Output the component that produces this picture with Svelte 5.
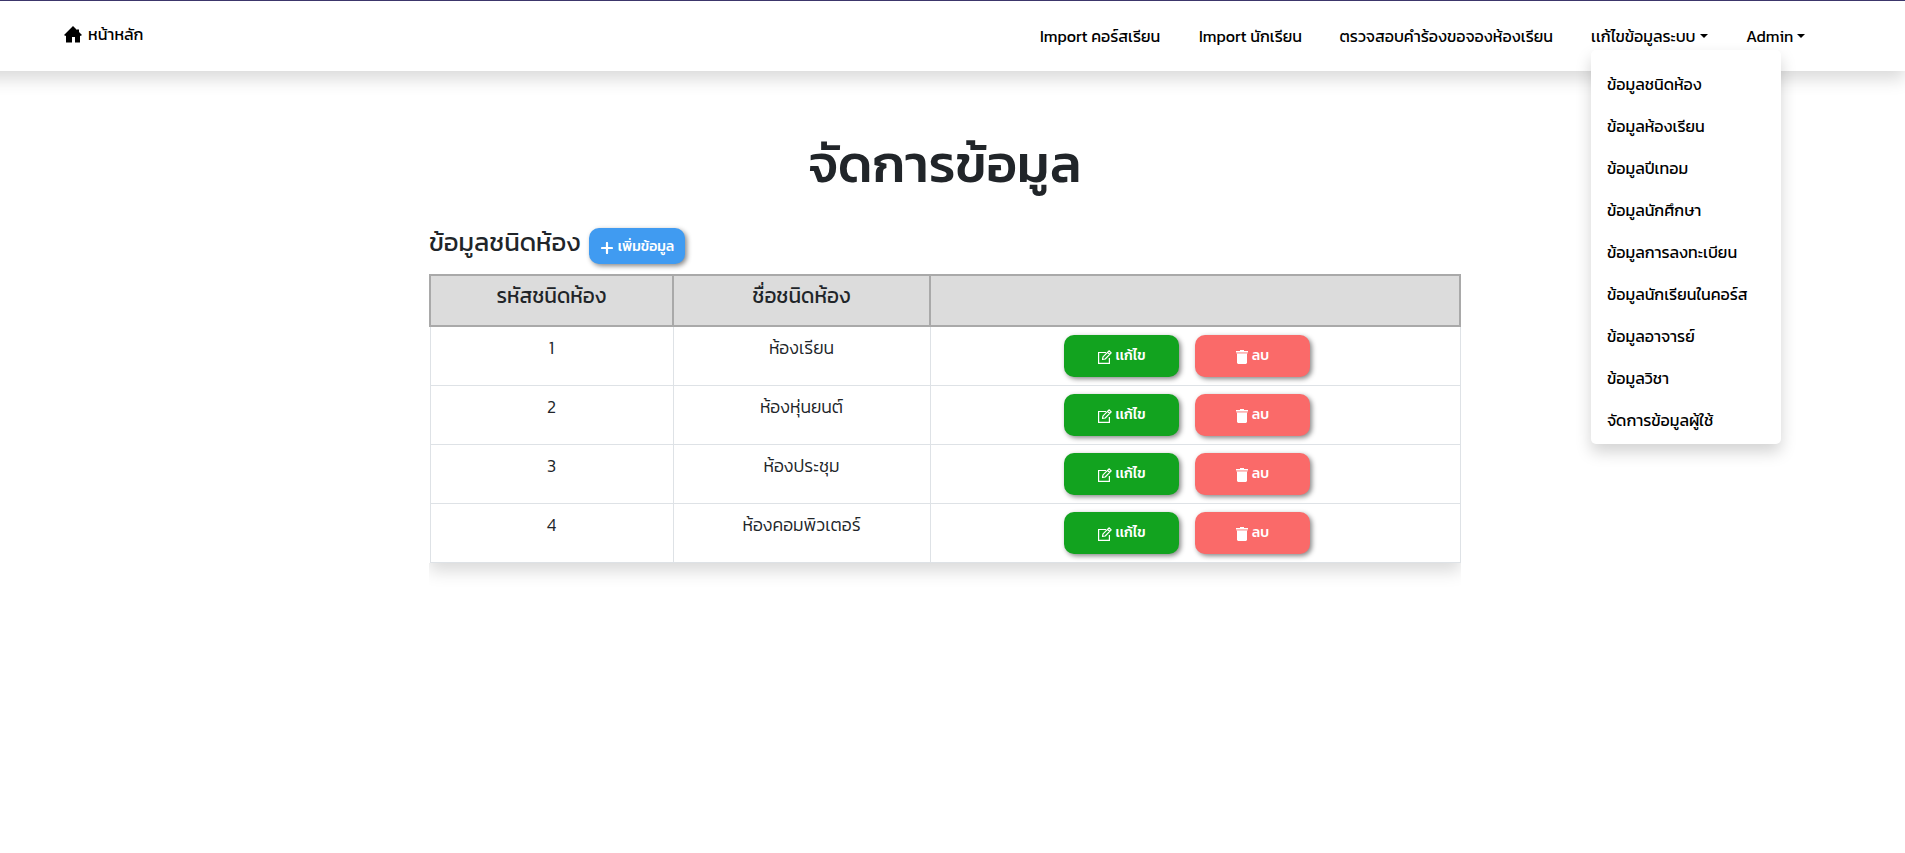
<script>
  const links = [
    { label: 'Import คอร์สเรียน', width: 121 },
    { label: 'Import นักเรียน', width: 102.500 },
    { label: 'ตรวจสอบคำร้องขอจองห้องเรียน', width: 213.500 },
  ];
  const menu = [
    'ข้อมูลชนิดห้อง',
    'ข้อมูลห้องเรียน',
    'ข้อมูลปีเทอม',
    'ข้อมูลนักศึกษา',
    'ข้อมูลการลงทะเบียน',
    'ข้อมูลนักเรียนในคอร์ส',
    'ข้อมูลอาจารย์',
    'ข้อมูลวิชา',
    'จัดการข้อมูลผู้ใช้',
  ];
  const rooms = [
    { id: 1, name: 'ห้องเรียน' },
    { id: 2, name: 'ห้องหุ่นยนต์' },
    { id: 3, name: 'ห้องประชุม' },
    { id: 4, name: 'ห้องคอมพิวเตอร์' },
  ];
</script>

<nav class="navbar">
  <a class="home" href="#home">
    <svg width="18" height="18" viewBox="0 0 18 18"><path d="M9 0 0 9l1.400 1 .6-.4v6.900h6V11h3v5.500h5V9.600l.6.4L18 9l-3-3V3.500h-2V4z" /></svg>
    <span>หน้าหลัก</span>
  </a>
  <div class="links">
    {#each links as link}
      <a href="#import" style:width="{link.width}px">{link.label}</a>
    {/each}
    <div class="dropdown">
      <a href="#data">เเก้ไขข้อมูลระบบ<i class="caret"></i></a>
      <div class="menu">
        {#each menu as item}
          <a href="#item"><span>{item}</span></a>
        {/each}
      </div>
    </div>
    <a class="admin" href="#admin">Admin<i class="caret"></i></a>
  </div>
</nav>

<main>
  <h1>จัดการข้อมูล</h1>
  <section>
    <div class="heading">
      <h2>ข้อมูลชนิดห้อง</h2>
      <button class="add">
        <svg width="12" height="12" viewBox="0 0 12 12"><path d="M6 1v10M1 6h10" fill="none" stroke="#fff" stroke-width="2.200" stroke-linecap="round" /></svg>
        <span>เพิ่มข้อมูล</span>
      </button>
    </div>
    <div class="clip">
      <table>
        <thead>
          <tr><th>รหัสชนิดห้อง</th><th>ชื่อชนิดห้อง</th><th></th></tr>
        </thead>
        <tbody>
          {#each rooms as room}
            <tr>
              <td>{room.id}</td>
              <td>{room.name}</td>
              <td>
                <div class="actions">
                  <button class="edit">
                    <svg width="14" height="14" viewBox="0 0 14 14" fill="none" stroke="#fff"><path d="M8 2.500H.6v10.800h10.800V8" stroke-width="1.200" /><path d="m4.500 9.500.5-2.700 6-6 2.200 2.100-6 6.100zM9.500 2.400l2.200 2.100" stroke-width="1.200" stroke-linejoin="round" /></svg>
                    <span>เเก้ไข</span>
                  </button>
                  <button class="delete">
                    <svg width="12" height="14" viewBox="0 0 12 14" fill="#fff"><path d="M4 0h4v1h4v1H0V1h4z" /><path d="M0 2h12v1.500H0z" opacity=".5" /><path d="M1 3.500h10V13l-1 1H2l-1-1z" /></svg>
                    <span>ลบ</span>
                  </button>
                </div>
              </td>
            </tr>
          {/each}
        </tbody>
      </table>
    </div>
  </section>
</main>

<style>
  :global(body) {
    margin: 0;
    background: #fff;
    color: #212529;
    font-family: Kanit, Prompt, 'Noto Sans Thai', 'Noto Sans', sans-serif;
  }
  * { box-sizing: border-box; }
  a { color: #000; text-decoration: none; white-space: nowrap; }
  button { border: 0; padding: 0; font: inherit; color: #fff; white-space: nowrap; }
  svg { display: block; flex: none; }

  .navbar {
    position: relative;
    display: flex;
    justify-content: space-between;
    height: 71px;
    margin-left: -20px;
    padding: 0 100px 0 84px;
    border-top: 1px solid #3c366b;
    background: #fff;
    box-shadow: 0 8px 16px rgba(0, 0, 0, .15);
    font-size: 16px;
    font-weight: 400;
    line-height: 24px;
  }
  .home { display: flex; gap: 6px; padding-top: 21px; }
  .home svg { margin-top: 4px; }
  .links { display: flex; gap: 38px; padding-top: 23px; }
  .dropdown { position: relative; width: 117px; }
  .dropdown > a, .admin { display: flex; align-items: center; justify-content: space-between; }
  .admin { width: 59px; height: 24px; }
  .caret { border: 4.500px solid transparent; border-top-color: #000; border-bottom: 0; }
  .menu {
    position: absolute;
    top: 26px;
    left: 0;
    width: 190px;
    height: 394px;
    padding: 13px 16px 0;
    border-radius: 5px;
    background: #fff;
    box-shadow: 0 8px 16px rgba(0, 0, 0, .175);
  }
  .menu a { display: flex; align-items: center; height: 42px; }

  h1, h2 { margin: 0; white-space: nowrap; }
  h1 { padding-top: 59px; width: 1890px; text-align: center; font-size: 52.800px; font-weight: 500; line-height: 68px; }
  section { width: 1032px; margin: 30px 0 0 429px; }
  .heading { display: flex; height: 46px; }
  h2 { width: 160px; font-size: 25.600px; font-weight: 400; line-height: 28px; }
  .add, .edit, .delete {
    display: flex;
    justify-content: center;
    border-radius: 10px;
    box-shadow: 2px 2px 5px #888;
    font-size: 14px;
    font-weight: 500;
    line-height: 20px;
  }
  .add { gap: 5px; width: 96px; height: 36px; padding: 9px 0 0 1px; background: #409bf1; }
  .add svg { margin-top: 5px; }
  .clip { height: 320px; overflow: hidden; }
  table {
    width: 1032px;
    border-collapse: collapse;
    table-layout: fixed;
    box-shadow: 0 8px 16px rgba(0, 0, 0, .15);
    background: #fff;
  }
  th { height: 51px; padding: 5px 0 0; border: 2px solid #a9a9a9; background: #dcdcdc; vertical-align: top; font-size: 20.800px; font-weight: 400; line-height: 30px; }
  th:nth-child(1) { width: 243px; }
  th:nth-child(2) { width: 257px; }
  td { height: 59px; padding: 7px 0 0; border: 1px solid #dee2e6; vertical-align: top; text-align: center; font-size: 17.600px; font-weight: 300; line-height: 28px; }
  .actions { display: flex; gap: 16px; justify-content: center; padding: 1px 17px 0 0; }
  .edit, .delete { width: 115px; height: 42px; padding: 11px 0 0 1px; gap: 4px; }
  .edit { background: #12a31f; }
  .delete { background: #fa6a69; }
  .edit svg, .delete svg { margin-top: 4px; }
</style>
